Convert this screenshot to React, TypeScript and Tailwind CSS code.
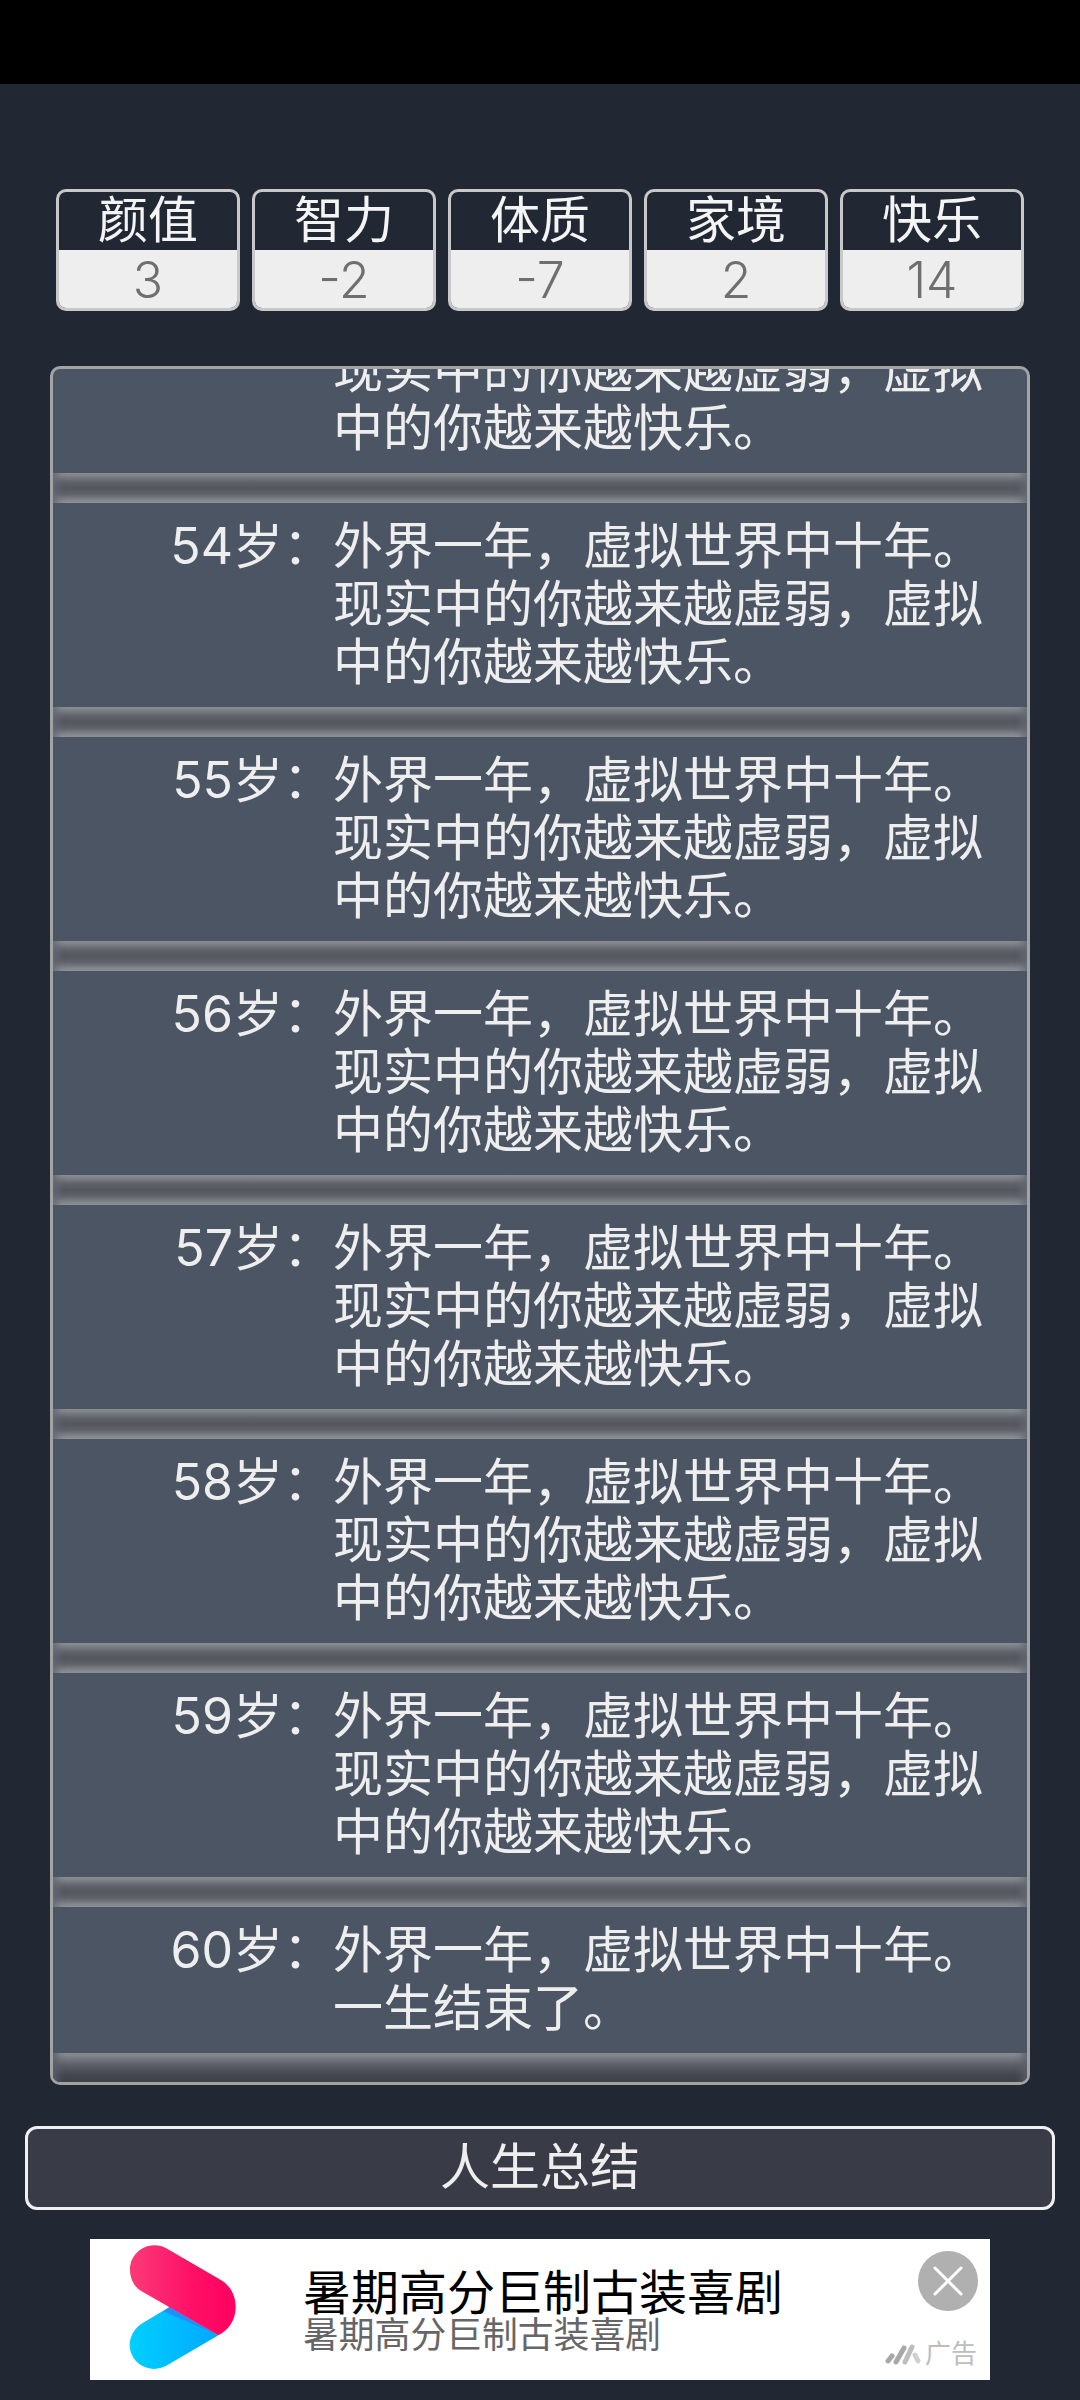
const font = { fontFamily: '"Inter", "Noto Sans CJK SC", sans-serif' };

const stats = [
  ["颜值", "3"],
  ["智力", "-2"],
  ["体质", "-7"],
  ["家境", "2"],
  ["快乐", "14"],
];

const loop = "外界一年，虚拟世界中十年。现实中的你越来越虚弱，虚拟中的你越来越快乐。";
const rows = [
  ["53岁：", loop],
  ["54岁：", loop],
  ["55岁：", loop],
  ["56岁：", loop],
  ["57岁：", loop],
  ["58岁：", loop],
  ["59岁：", loop],
  ["60岁：", "外界一年，虚拟世界中十年。一生结束了。"],
];

function Row({ age, text, first, last }: { age: string; text: string; first?: boolean; last?: boolean }) {
  return (
    <div>
      <div className="flex pt-[14px] pb-[16px] text-[50px] leading-[58px] text-[#eeeeee]">
        <div className="w-[280px] shrink-0 text-right">{first ? "" : age}</div>
        <div className="w-[655px] font-normal">{text}</div>
      </div>
      {last ? (
        <div className="h-[30px] bg-[linear-gradient(to_bottom,#8c8f94,#5b5e65_40%,#43464e_75%,#3d4048)] shadow-[inset_12px_0_8px_-8px_#5a606c,inset_-12px_0_8px_-8px_#5a606c]" />
      ) : (
        <div className="h-[30px] bg-[linear-gradient(to_bottom,#8e9196,#5f6268_30%,#54575d_50%,#5f6268_70%,#92959a)] shadow-[inset_12px_0_8px_-8px_#646a76,inset_-12px_0_8px_-8px_#646a76]" />
      )}
    </div>
  );
}

export default function App() {
  return (
    <div className="flex h-[2400px] w-[1080px] flex-col overflow-hidden bg-[#212833]" style={font}>
      <div className="h-[84px] bg-black" />
      <div className="mt-[105px] flex gap-[12px] pl-[56px]">
        {stats.map(([k, v]) => (
          <div key={k} className="h-[122px] w-[184px] overflow-hidden rounded-[10px] border-[3px] border-[#c8c8c8] text-center">
            <div className="h-[58px] text-[50px] leading-[56px] text-[#f4f4f4]">{k}</div>
            <div className="h-[58px] bg-[#eeeeee] text-[50px] leading-[60px] font-light text-[#6f6f6f]">{v}</div>
          </div>
        ))}
      </div>
      <div className="mt-[55px] ml-[50px] h-[1719px] w-[980px] overflow-hidden rounded-[10px] border-[3px] border-[#a3a3a3] bg-[#4b5563]">
        <div className="-mt-[100px]">
          {rows.map(([a, t], i) => (
            <Row key={a} age={a} text={t} first={i === 0} last={i === rows.length - 1} />
          ))}
        </div>
      </div>
      <div className="mt-[41px] ml-[25px] flex h-[84px] w-[1030px] items-center justify-center rounded-[12px] border-[3px] border-[#f0f0f0] bg-[#393c46] pb-[2px] text-[50px] text-[#eeeeee]">
        人生总结
      </div>
      <div className="relative mt-[29px] ml-[90px] flex h-[141px] w-[900px] items-center bg-white">
        <svg className="mb-[6px] ml-[37px] shrink-0" width="113" height="130" viewBox="140 30 340 390">
          <defs>
            <linearGradient id="red" x1="0" x2="1" y1="0" y2="0">
              <stop offset="0" stopColor="#fb3a78" />
              <stop offset="0.6" stopColor="#ff0f66" />
              <stop offset="1" stopColor="#ff0060" />
            </linearGradient>
            <linearGradient id="blue" x1="0" x2="1" y1="0" y2="0">
              <stop offset="0" stopColor="#00d0ff" />
              <stop offset="1" stopColor="#00a8ff" />
            </linearGradient>
          </defs>
          <path d="M268 225 L415 310 L258 402 C232 416 200 414 176 396 C150 376 142 340 152 316 C158 298 170 284 186 274 Z" fill="url(#blue)" />
          <path d="M268 225 L415 310 L250 238 Z" fill="#1e8fff" />
          <path d="M258 48 L425 145 C452 162 467 192 467 225 C467 264 446 294 415 310 L180 175 C160 162 149 138 149 112 C149 72 182 39 222 39 C236 39 248 42 258 48 Z" fill="url(#red)" />
        </svg>
        <div className="mt-[3px] ml-[63px] text-left">
          <div className="text-[48px] leading-[48px] text-black">暑期高分巨制古装喜剧</div>
          <div className="text-[35.8px] leading-[36px] text-[#666666]">暑期高分巨制古装喜剧</div>
        </div>
        <div className="absolute top-[12px] right-[12px] flex h-[60px] w-[60px] items-center justify-center rounded-full bg-[#b0b0b0]">
          <svg width="32" height="32" viewBox="0 0 32 32">
            <path d="M3 3 L29 29 M29 3 L3 29" stroke="#ffffff" strokeWidth="3" strokeLinecap="round" />
          </svg>
        </div>
        <div className="absolute right-[13px] bottom-[11px] flex items-center gap-[4px] text-[26px] leading-[30px] text-[#bdbdbd]">
          <svg width="36" height="22" viewBox="0 0 36 22">
            <g strokeWidth="5" strokeLinecap="round">
              <path d="M3 18 L7 13" stroke="#a8a8a8" />
              <path d="M11 19 L19 5" stroke="#a8a8a8" />
              <path d="M20 19 L27 4" stroke="#bdbdbd" />
              <path d="M30 12 L33 18" stroke="#d0d0d0" />
            </g>
          </svg>
          广告
        </div>
      </div>
    </div>
  );
}
